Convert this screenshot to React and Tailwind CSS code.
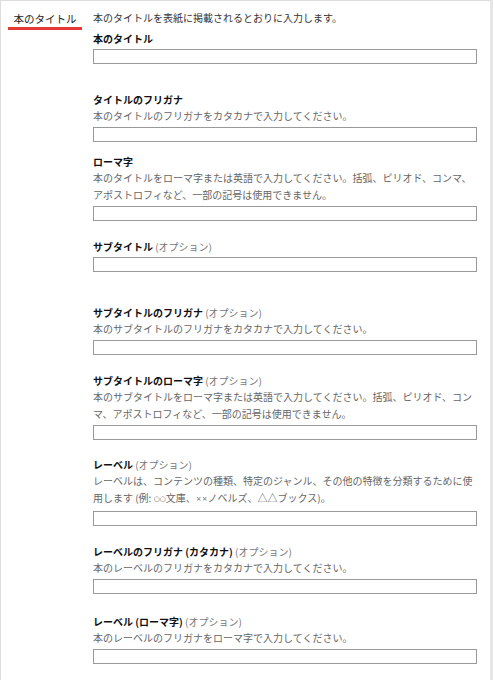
import React from "react";

const small = (s) => <span className="text-[7px] align-[1px]" style={{ fontFamily: '"DejaVu Sans", sans-serif' }}>{s}</span>;

const fields = [
  { label: "本のタイトル", mt: "mt-[6px]" },
  { label: "タイトルのフリガナ", desc: ["本のタイトルのフリガナをカタカナで入力してください。"], mt: "mt-[29px]" },
  { label: "ローマ字", desc: ["本のタイトルをローマ字または英語で入力してください。括弧、ピリオド、コンマ、", "アポストロフィなど、一部の記号は使用できません。"], mt: "mt-[13px]" },
  { label: "サブタイトル", opt: true, mt: "mt-[19px]" },
  { label: "サブタイトルのフリガナ", opt: true, desc: ["本のサブタイトルのフリガナをカタカナで入力してください。"], mt: "mt-[34px]" },
  { label: "サブタイトルのローマ字", opt: true, desc: ["本のサブタイトルをローマ字または英語で入力してください。括弧、ピリオド、コン", "マ、アポストロフィなど、一部の記号は使用できません。"], mt: "mt-[19px]" },
  {
    label: "レーベル",
    opt: true,
    desc: [
      "レーベルは、コンテンツの種類、特定のジャンル、その他の特徴を分類するために使",
      <>用します (例: {small("○○")}文庫、{small("××")}ノベルズ、△△ブックス)。</>,
    ],
    mt: "mt-[18px]",
  },
  { label: "レーベルのフリガナ (カタカナ)", opt: true, desc: ["本のレーベルのフリガナをカタカナで入力してください。"], mt: "mt-[19px]" },
  { label: "レーベル (ローマ字)", opt: true, desc: ["本のレーベルのフリガナをローマ字で入力してください。"], mt: "mt-[21px]" },
];

function Field({ label, opt, desc, mt }) {
  return (
    <div className={mt}>
      <div className="text-[10px] leading-[14px] text-[#111]">
        <span className="font-bold">{label}</span>
        {opt && <span className="text-[#777]"> (オプション)</span>}
      </div>
      {desc && desc.map((line, i) => (
        <div key={i} className="text-[10px] leading-[17px] text-[#666] whitespace-nowrap">{line}</div>
      ))}
      <input type="text" className="mt-[3px] block w-[384px] h-[15px] border border-[#999] bg-white" />
    </div>
  );
}

export default function App() {
  return (
    <div className="w-[493px] h-[680px] bg-[#e6e6e6] overflow-hidden" style={{ fontFamily: '"Noto Sans CJK JP", "Noto Sans", sans-serif' }}>
      <div className="w-[490px] h-[680px] bg-white border-t border-l border-[#ddd] flex">
        <div className="w-[92px] shrink-0 pt-[11px] pl-[7px]">
          <div className="w-[74px] text-center text-[10.5px] leading-[14px] text-[#222] pb-[1px] border-b-[3px] border-[#e53935]">
            本のタイトル
          </div>
        </div>
        <div className="flex-1 pt-[9px]">
          <div className="text-[10px] leading-[16px] text-[#333]">本のタイトルを表紙に掲載されるとおりに入力します。</div>
          {fields.map((f, i) => <Field key={i} {...f} />)}
        </div>
      </div>
    </div>
  );
}
